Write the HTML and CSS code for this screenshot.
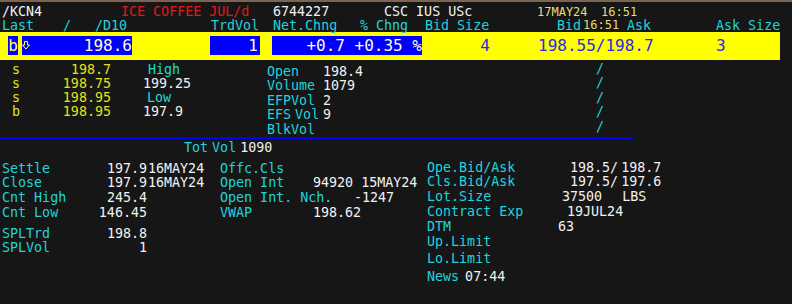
FILE: index.html
```html
<!DOCTYPE html>
<html lang="en">
<head>
  <meta charset="UTF-8" />
  <meta name="viewport" content="width=device-width, initial-scale=1.0" />
  <title>KCN4 Quote</title>
  <link rel="stylesheet" href="styles.css">
</head>
<body>
  <div class="topline"></div>

  <div class="title-row">
    <span class="wht">/KCN4</span>
    <span class="red">ICE COFFEE JUL/d</span>
    <span class="wht">6744227</span>
    <span class="wht">CSC IUS USc</span>
    <span class="time">17MAY24</span>
    <span class="time">16:51</span>
  </div>

  <div class="label-row">
    <span>Last</span>
    <span>/</span>
    <span>/D10</span>
    <span>TrdVol</span>
    <span>Net.Chng</span>
    <span>% Chng</span>
    <span>Bid Size</span>
    <span>Bid</span>
    <span class="time">16:51</span>
    <span>Ask</span>
    <span>Ask Size</span>
  </div>

  <div class="quote-band">
    <span class="qbox side">b</span>
    <span class="qbox last">
      <svg class="tick" width="8" height="9" viewBox="0 0 8 9">
        <path d="M2.5 0.5 H5.5 V4 H7.5 L4 8 L0.5 4 H2.5 Z" fill="none" stroke="#ffff5a" stroke-width="1"/>
      </svg>
      <span>198.6</span>
    </span>
    <span class="qbox vol">1</span>
    <span class="qbox chg">+0.7 +0.35 %</span>
    <span class="bsize">4</span>
    <span class="bidask">198.55/198.7</span>
    <span class="asize">3</span>
  </div>

  <div class="book">
    <div class="trades">
      <span>s</span><span class="px">198.7</span><span class="hl lbl">High</span>
      <span>s</span><span class="px">198.75</span><span class="hl wht">199.25</span>
      <span>s</span><span class="px">198.95</span><span class="hl lbl low">Low</span>
      <span>b</span><span class="px">198.95</span><span class="hl wht">197.9</span>
    </div>
    <div class="stats">
      <span>Open</span><span class="wht">198.4</span>
      <span>Volume</span><span class="wht">1079</span>
      <span>EFPVol</span><span class="wht">2</span>
      <span>EFS<span class="sq">Vol</span></span><span class="wht">9</span>
      <span>BlkVol</span><span></span>
    </div>
    <div class="slashes">
      <span>/</span>
      <span>/</span>
      <span>/</span>
      <span>/</span>
      <span>/</span>
    </div>
  </div>
  <div class="rule"></div>

  <div class="totvol">Tot<span class="sq">Vol</span><span class="wht sq">1090</span></div>

  <div class="details">
    <div class="col-left">
      <div class="grid-left">
        <span>Settle</span><span class="num">197.9</span><span class="date">16MAY24</span>
        <span>Close</span><span class="num">197.9</span><span class="date">16MAY24</span>
        <span>Cnt High</span><span class="num">245.4</span><span></span>
        <span>Cnt Low</span><span class="num">146.45</span><span></span>
      </div>
      <div class="grid-left spl">
        <span>SPLTrd</span><span class="num">198.8</span><span></span>
        <span>SPLVol</span><span class="num">1</span><span></span>
      </div>
    </div>

    <div class="col-mid">
      <span>Offc.Cls</span><span></span>
      <span>Open Int</span><span class="wht">94920 15MAY24</span>
      <span>Open Int. Nch.</span><span class="wht nch">-1247</span>
      <span>VWAP</span><span class="wht">198.62</span>
    </div>

    <div class="col-right">
      <span>Ope.Bid/Ask</span><span class="wht off12">198.5/<span class="sq3">198.7</span></span>
      <span>Cls.Bid/Ask</span><span class="wht off12">197.5/<span class="sq3">197.6</span></span>
      <span>Lot.Size</span><span class="wht off4">37500<span class="unit">LBS</span></span>
      <span>Contract Exp</span><span class="wht off9">19JUL24</span>
      <span>DTM</span><span class="wht">63</span>
      <span>Up.Limit</span><span></span>
      <span class="lo">Lo.Limit</span><span></span>
      <div class="news">News<span class="wht">07:44</span></div>
    </div>
  </div>
</body>
</html>
```

FILE: styles.css
```css
* {
  box-sizing: border-box;
}

body {
  margin: 0;
  width: 792px;
  height: 304px;
  overflow: hidden;
  background: #161616;
  color: #1fd3de;
  font-family: "DejaVu Sans Mono", "Liberation Mono", monospace;
  font-size: 13.33px;
}

span {
  white-space: pre;
}

.wht {
  color: #f2f2f2;
}

.red {
  color: #e01a1a;
}

.time {
  color: #e6de74;
  font-size: 12px;
}

.topline {
  height: 2px;
  background: #7d6450;
}

.title-row {
  display: grid;
  grid-template-columns: 119px 152px 111px 153px 64px auto;
  padding: 3px 0 0 2px;
  line-height: 14px;
}

.label-row {
  display: grid;
  grid-template-columns: 61px 32px 116px 62px 87px 65px 132px 26px 44px 89px auto;
  padding-left: 2px;
  line-height: 13px;
}

.quote-band {
  display: flex;
  align-items: flex-start;
  width: 780px;
  height: 28px;
  padding: 4px 0 0 8px;
  background: #ffff00;
  color: #2a2ae6;
  font-size: 16px;
  line-height: 19px;
}

.qbox {
  height: 19px;
  background: #0000ff;
  color: #fffbd0;
}

.side {
  width: 10px;
  text-align: center;
  color: #ffff5a;
}

.last {
  width: 110px;
  margin-left: 4px;
  display: flex;
  justify-content: space-between;
}

.tick {
  margin-top: 5px;
}

.vol {
  width: 50px;
  margin-left: 78px;
  padding-right: 2px;
  text-align: right;
}

.chg {
  width: 150px;
  margin-left: 12px;
  text-align: right;
}

.bsize {
  width: 68px;
  text-align: right;
}

.bidask {
  width: 178px;
  margin-left: 48px;
}

.book {
  display: flex;
  height: 77px;
}

.trades {
  width: 267px;
  padding: 3px 0 0 12px;
  display: grid;
  grid-template-columns: 20px 79px auto;
  align-content: start;
  line-height: 14px;
  color: #e6e01e;
}

.px {
  text-align: right;
}

.hl {
  padding-left: 32px;
}

.hl.lbl {
  padding-left: 37px;
  color: #1fdccb;
}

.hl.low {
  padding-left: 36px;
}

.stats {
  width: 330px;
  padding-top: 4.75px;
  display: grid;
  grid-template-columns: 56px auto;
  align-content: start;
  line-height: 14.5px;
}

.sq {
  margin-left: 4px;
}

.slashes {
  display: flex;
  flex-direction: column;
  margin-left: -1px;
  padding-top: 1.75px;
  line-height: 14.5px;
}

.rule {
  width: 633px;
  height: 2px;
  background: #0000ff;
}

.totvol {
  padding: 2px 0 0 184px;
  line-height: 14px;
}

.details {
  display: flex;
  margin-top: 6.6px;
}

.col-left {
  width: 220px;
  padding-left: 2px;
}

.grid-left {
  display: grid;
  grid-template-columns: 96px 49px auto;
  line-height: 14.67px;
}

.grid-left .num {
  color: #f2f2f2;
  text-align: right;
}

.grid-left .date {
  color: #f2f2f2;
  padding-left: 1px;
}

.spl {
  margin-top: 6.3px;
}

.col-mid {
  width: 207px;
  display: grid;
  grid-template-columns: 93px auto;
  align-content: start;
  line-height: 14.67px;
}

.nch {
  padding-left: 41px;
}

.col-right {
  margin-top: -1px;
  display: grid;
  grid-template-columns: 131px auto;
  align-content: start;
  line-height: 14.8px;
}

.off12 {
  padding-left: 12px;
}

.off9 {
  padding-left: 9px;
}

.off4 {
  padding-left: 4px;
}

.sq3 {
  margin-left: 3px;
}

.unit {
  margin-left: 20px;
}

.lo {
  margin-top: 2.2px;
}

.news {
  grid-column: 1 / -1;
  margin-top: 3.2px;
}

.news .wht {
  margin-left: 6px;
}
```
